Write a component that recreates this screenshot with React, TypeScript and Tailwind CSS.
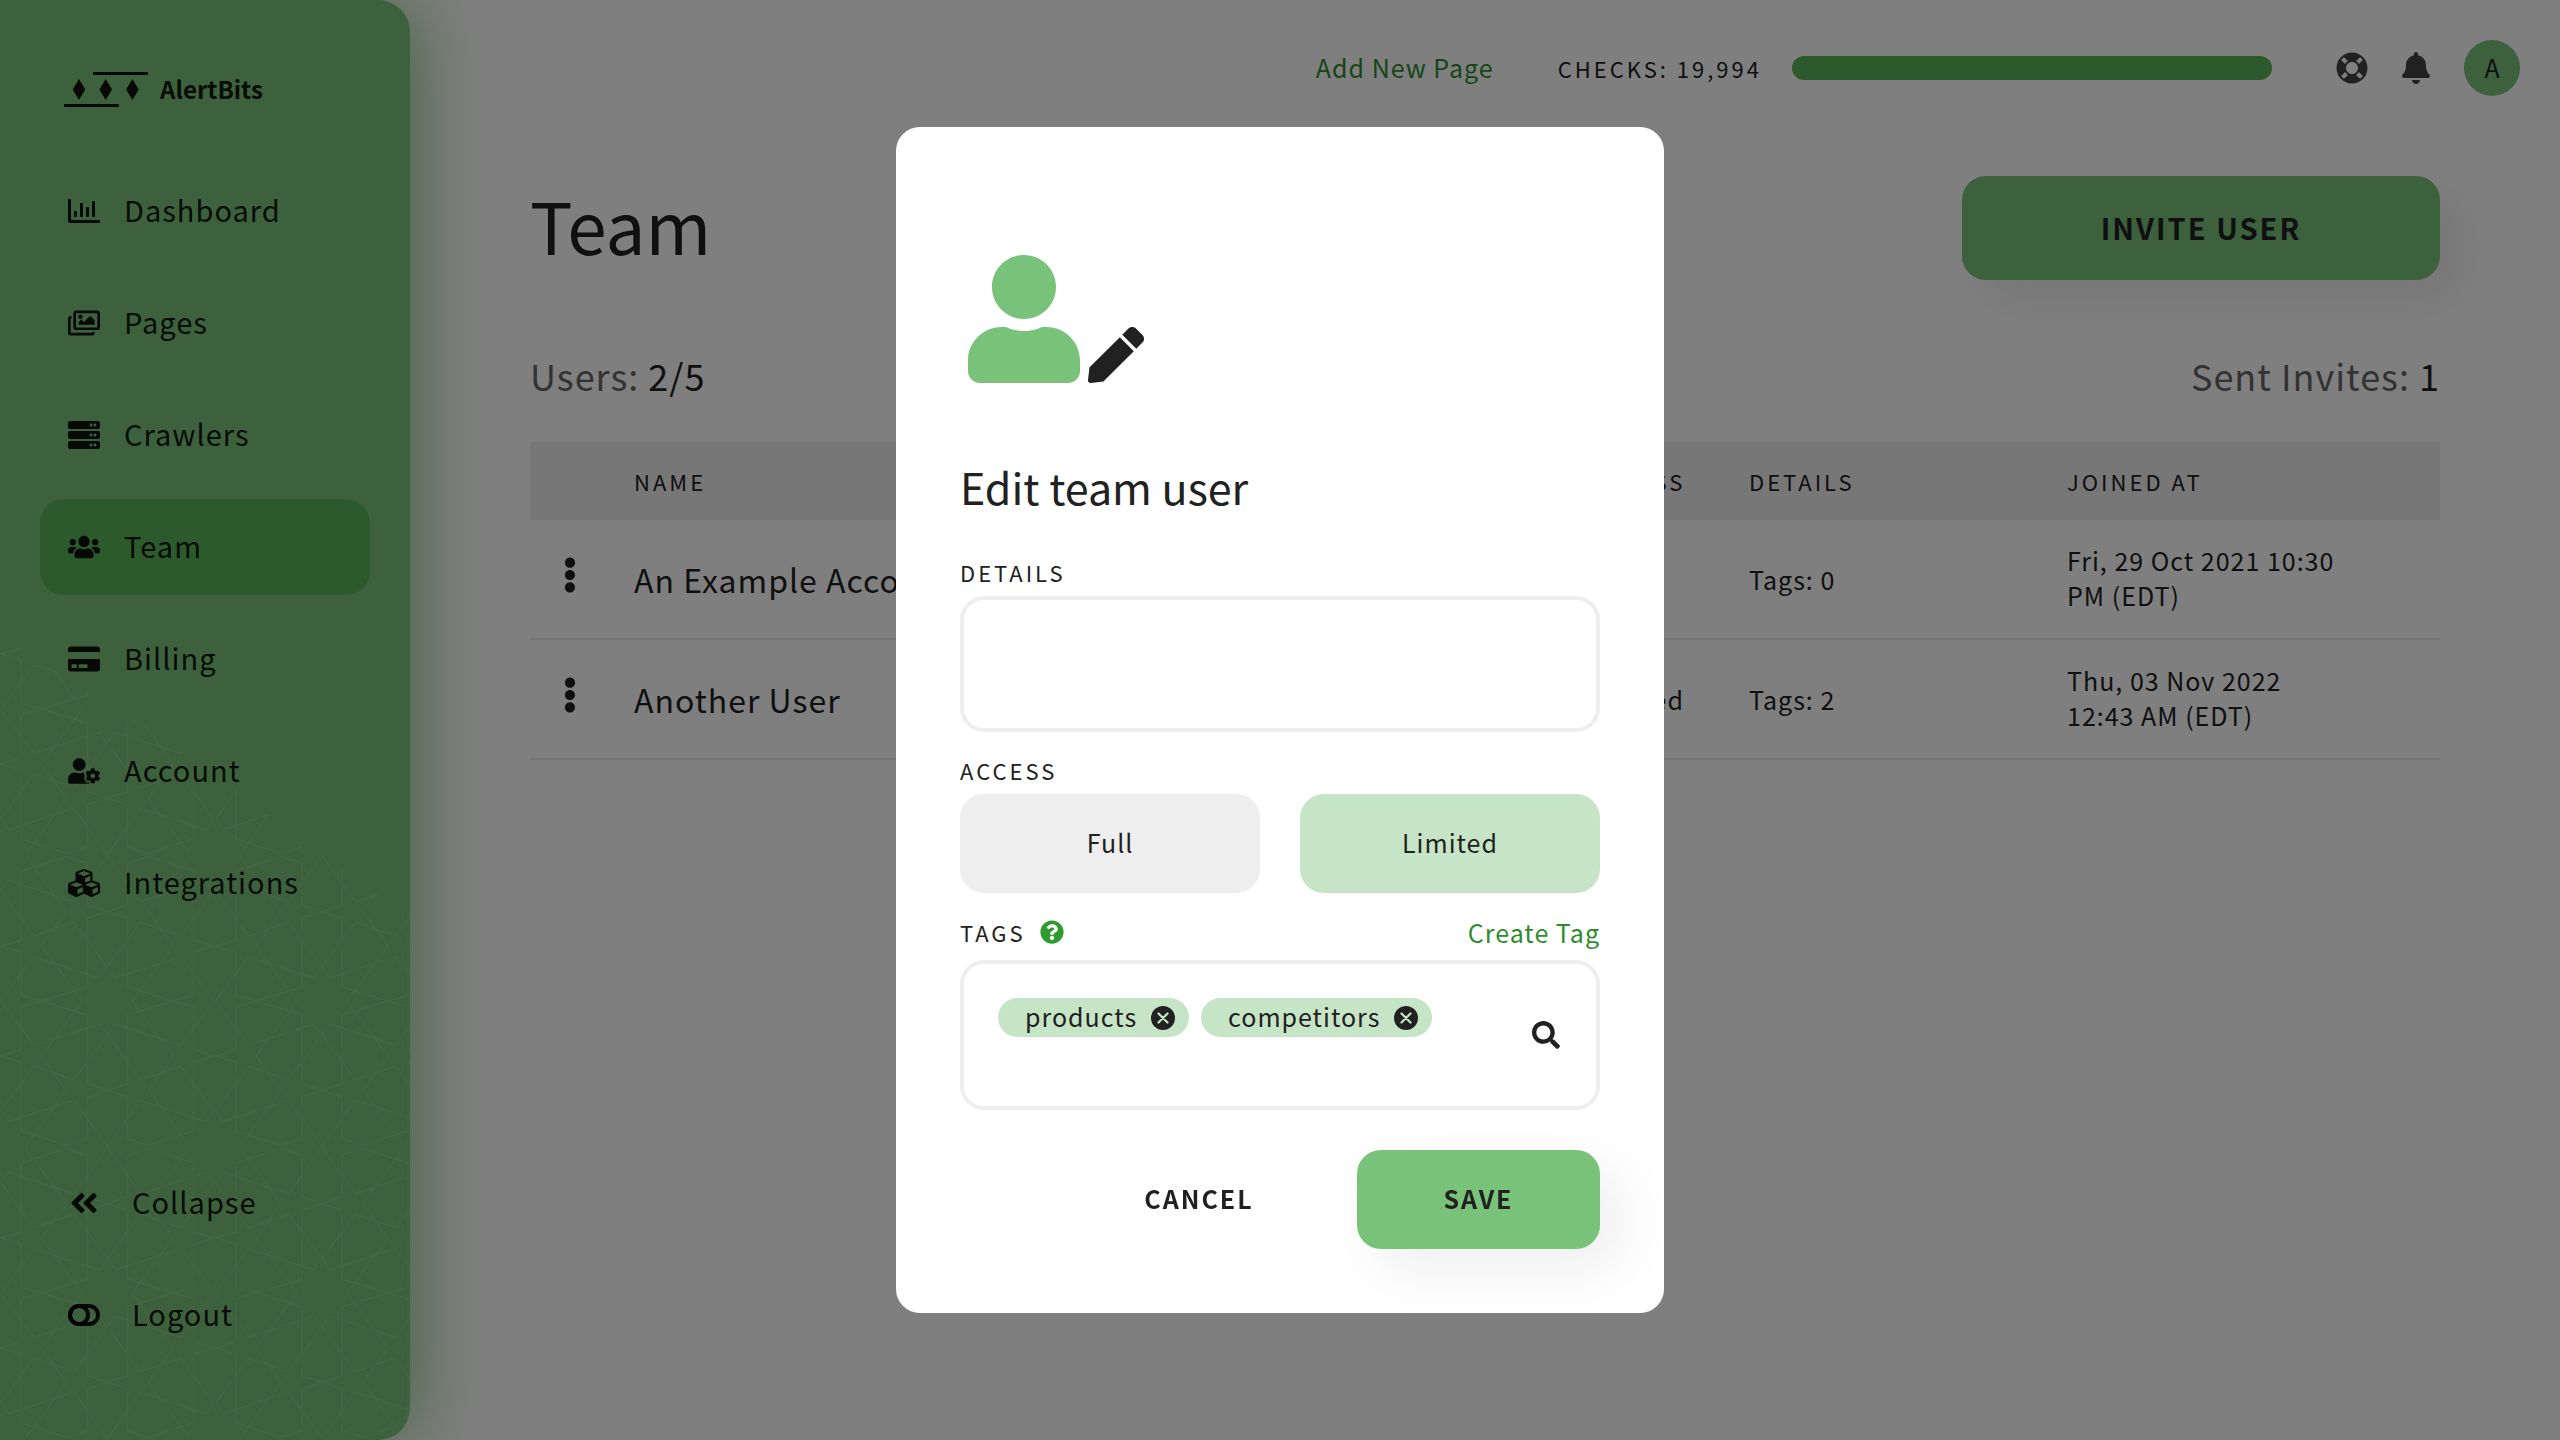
import type { ReactNode } from "react";
import type { IconType } from "react-icons";
import {
  FaAngleDoubleLeft,
  FaBell,
  FaCreditCard,
  FaCubes,
  FaEllipsisV,
  FaLifeRing,
  FaPen,
  FaQuestionCircle,
  FaRegChartBar,
  FaRegImages,
  FaSearch,
  FaServer,
  FaUser,
  FaUserCog,
  FaUsers,
} from "react-icons/fa";

const NAV: { label: string; icon: IconType; active?: boolean }[] = [
  { label: "Dashboard", icon: FaRegChartBar },
  { label: "Pages", icon: FaRegImages },
  { label: "Crawlers", icon: FaServer },
  { label: "Team", icon: FaUsers, active: true },
  { label: "Billing", icon: FaCreditCard },
  { label: "Account", icon: FaUserCog },
  { label: "Integrations", icon: FaCubes },
];

const USERS = [
  { name: "An Example Account", access: "Full", details: "Tags: 0", joined: "Fri, 29 Oct 2021 10:30 PM (EDT)" },
  { name: "Another User", access: "Limited", details: "Tags: 2", joined: "Thu, 03 Nov 2022 12:43 AM (EDT)" },
];

const TAGS = ["products", "competitors"];

function Logo() {
  return (
    <svg viewBox="0 0 84 36" className="h-9 w-[84px]" fill="currentColor" aria-hidden="true">
      <rect x="29" y="0" width="55" height="3" rx="1" />
      <rect x="0" y="32" width="55" height="3" rx="1" />
      <path d="M15 7l6.300 10.500L15 28 8.700 17.500zM41.700 7L48 17.500 41.700 28l-6.300-10.500zM68.400 7l6.300 10.500L68.400 28l-6.300-10.500z" />
    </svg>
  );
}

function ToggleIcon() {
  return (
    <svg viewBox="0 0 32 22" className="w-8" fill="none" stroke="currentColor" strokeWidth="4" aria-hidden="true">
      <rect x="2" y="2" width="28" height="18" rx="9" />
      <circle cx="11" cy="11" r="9" />
    </svg>
  );
}

function RemoveIcon() {
  return (
    <svg viewBox="0 0 24 24" className="size-6" aria-hidden="true">
      <circle cx="12" cy="12" r="12" fill="currentColor" />
      <path d="M7.500 7.500l9 9M16.500 7.500l-9 9" stroke="#c6e5c6" strokeWidth="2.200" strokeLinecap="round" />
    </svg>
  );
}

/* Ten-fold star lattice: one quarter of the tile, mirrored into the other three. */
function StarPattern() {
  return (
    <svg viewBox="0 0 410 816" preserveAspectRatio="xMinYMax slice" className="absolute bottom-0 left-0 w-full" aria-hidden="true">
      <defs>
        <path
          id="quarter"
          d="M64 17L126 0L262 42V249L322 268L262 288V413L199 433L64 390V183L3 165L64 145V17M3 2L102 133L298 69L322 102L222 237L102 195L3 330L26 362L222 297L322 437M247 0L124 165L199 268L78 433"
        />
        <pattern id="stars" width="644" height="876" patternUnits="userSpaceOnUse" patternTransform="translate(0 377) scale(0.3333)">
          <g fill="none" stroke="#ffffff" strokeWidth="4">
            <use href="#quarter" />
            <use href="#quarter" transform="translate(644 0) scale(-1 1)" />
            <use href="#quarter" transform="translate(0 876) scale(1 -1)" />
            <use href="#quarter" transform="translate(644 876) scale(-1 -1)" />
          </g>
        </pattern>
      </defs>
      <path d="M0 10L80 62L180 122L300 216L410 290V816H0z" fill="url(#stars)" fillOpacity="0.13" />
    </svg>
  );
}

function NavLink({ label, active, children }: { label: string; active?: boolean; children: ReactNode }) {
  return (
    <a
      href="#"
      aria-current={active ? "page" : undefined}
      className={`flex h-24 items-center gap-6 rounded-3xl px-7 text-[29px] tracking-[1px] ${active ? "bg-[#58b458]" : ""}`}
    >
      {children}
      <span className="pb-0.5">{label}</span>
    </a>
  );
}

function Sidebar() {
  return (
    <aside className="relative flex min-h-screen w-[410px] shrink-0 flex-col rounded-r-[32px] bg-[#79c279] px-10 pb-[77px] text-black/90 shadow-[0_0_80px_#79c279]">
      <div className="absolute inset-0 overflow-hidden rounded-r-[32px]">
        <StarPattern />
      </div>
      <a href="#" className="relative mt-[72px] mb-[55px] flex h-9 items-center gap-3 pl-6 text-[24px] font-bold">
        <Logo />
        <span className="pb-0.5">AlertBits</span>
      </a>
      <nav className="relative flex grow flex-col gap-4">
        {NAV.map(({ label, icon: Icon, active }) => (
          <NavLink key={label} label={label} active={active}>
            <Icon className="h-auto w-8" />
          </NavLink>
        ))}
        <button type="button" className="mt-auto flex h-24 items-center gap-8 px-7 text-[29px] tracking-[1px]">
          <FaAngleDoubleLeft className="size-8" />
          <span className="pb-0.5">Collapse</span>
        </button>
        <button type="button" className="flex h-24 items-center gap-8 px-7 text-[29px] tracking-[1px]">
          <ToggleIcon />
          <span className="pb-0.5">Logout</span>
        </button>
      </nav>
    </aside>
  );
}

function TopBar() {
  return (
    <header className="flex h-[136px] items-center justify-end pr-10">
      <a href="#" className="mr-16 text-[25px] tracking-[1px] text-[#2e8b2e]">
        Add New Page
      </a>
      <span className="mr-[30px] text-[22px] tracking-[3px]">CHECKS: 19,994</span>
      <div role="progressbar" aria-label="Checks" aria-valuenow={19994} aria-valuemax={20000} className="mr-16 h-6 w-[480px] rounded-full bg-[#58b458]" />
      <button type="button" aria-label="Help" className="mr-8">
        <FaLifeRing className="size-8 text-[#424242]" />
      </button>
      <button type="button" aria-label="Notifications" className="mr-8">
        <FaBell className="size-8 text-[#424242]" />
      </button>
      <button type="button" className="size-14 rounded-full bg-[#79c279] text-[25px]">
        A
      </button>
    </header>
  );
}

function TeamPage() {
  return (
    <main className="px-[120px] pt-10">
      <div className="flex items-center justify-between">
        <h1 className="pb-2 text-[71px] leading-[96px]">Team</h1>
        <button
          type="button"
          className="h-[104px] w-[478px] rounded-3xl bg-[#79c279] text-[29px] font-bold tracking-[2px] shadow-[20px_20px_48px_rgba(0,0,0,0.08)]"
        >
          INVITE USER
        </button>
      </div>
      <div className="mt-[71px] mb-[43px] flex justify-between text-[36px] leading-[48px] tracking-[1px]">
        <p>
          <span className="text-[#666666]">Users:</span> 2/5
        </p>
        <p>
          <span className="text-[#666666]">Sent Invites:</span> 1
        </p>
      </div>
      <table className="w-full table-fixed border-separate border-spacing-0 text-left">
        <colgroup>
          <col className="w-[72px]" />
          <col />
          <col className="w-[161px]" />
          <col className="w-[318px]" />
          <col className="w-[405px]" />
        </colgroup>
        <thead>
          <tr className="h-[78px] bg-[#eeeeee] text-[22px] tracking-[3px]">
            <th aria-label="Actions" />
            <th className="px-8 font-normal">NAME</th>
            <th className="pl-8 font-normal">ACCESS</th>
            <th className="px-8 font-normal">DETAILS</th>
            <th className="px-8 font-normal">JOINED AT</th>
          </tr>
        </thead>
        <tbody>
          {USERS.map((user) => (
            <tr key={user.name} className="h-[120px] text-[25px] leading-[35px] tracking-[1px] *:border-b-2 *:border-[#ebebeb]">
              <td className="pb-2 pl-[22px]">
                <button type="button" aria-label={`Actions for ${user.name}`} className="block">
                  <FaEllipsisV className="size-9" />
                </button>
              </td>
              <td className="px-8 text-[32px]">{user.name}</td>
              <td className="pl-8">{user.access}</td>
              <td className="px-8">{user.details}</td>
              <td className="pr-24 pb-0.5 pl-8">{user.joined}</td>
            </tr>
          ))}
        </tbody>
      </table>
    </main>
  );
}

function EditUserDialog() {
  return (
    <div className="fixed inset-0 flex items-center justify-center bg-black/50">
      <form role="dialog" aria-labelledby="dialog-title" className="w-[768px] rounded-3xl bg-white p-16 text-[25px] tracking-[1px]">
        <div className="mt-16 flex items-end gap-2 pl-2">
          <FaUser className="h-32 w-28 text-[#79c279]" />
          <FaPen className="size-14" />
        </div>
        <h2 id="dialog-title" className="mt-[71px] text-[43px] leading-[64px] tracking-normal">
          Edit team user
        </h2>
        <label htmlFor="details" className="mt-[38px] block text-[22px] leading-8 tracking-[3px]">
          DETAILS
        </label>
        <textarea id="details" className="mt-2 block h-[136px] w-full resize-none rounded-3xl border-4 border-[#eeeeee] p-6" />

        <div id="access" className="mt-[22px] text-[22px] leading-8 tracking-[3px]">
          ACCESS
        </div>
        <div role="group" aria-labelledby="access" className="mt-2 grid grid-cols-2 gap-10">
          <button type="button" aria-pressed="false" className="h-[99px] rounded-3xl bg-[#eeeeee] pb-0.5 tracking-[1px]">
            Full
          </button>
          <button type="button" aria-pressed="true" className="h-[99px] rounded-3xl bg-[#c6e5c6] pb-0.5 tracking-[1px]">
            Limited
          </button>
        </div>

        <div className="mt-[22px] flex h-9 items-center justify-between">
          <div className="flex items-center gap-[14px] pb-0.5">
            <label htmlFor="tags" className="text-[22px] leading-8 tracking-[3px]">
              TAGS
            </label>
            <button type="button" aria-label="About tags">
              <FaQuestionCircle className="size-6 text-[#2e9b2e]" />
            </button>
          </div>
          <a href="#" className="text-[#2e8b2e]">
            Create Tag
          </a>
        </div>
        <div className="mt-[9px] flex h-[150px] items-center rounded-3xl border-4 border-[#eeeeee] pr-9 pl-[34px]">
          <ul className="flex gap-3 self-start pt-[34px]">
            {TAGS.map((tag) => (
              <li key={tag} className="flex h-[39px] items-center gap-[14px] rounded-full bg-[#c6e5c6] pr-[14px] pl-[27px]">
                <span className="pb-0.5">{tag}</span>
                <button type="button" aria-label={`Remove ${tag}`}>
                  <RemoveIcon />
                </button>
              </li>
            ))}
          </ul>
          <input id="tags" type="text" className="h-full w-0 grow outline-none" />
          <FaSearch className="size-7" />
        </div>

        <div className="mt-10 flex justify-end gap-2 font-bold">
          <button type="button" className="h-[99px] w-[300px] pb-0.5 tracking-[2px]">
            CANCEL
          </button>
          <button type="submit" className="h-[99px] w-[243px] rounded-3xl bg-[#79c279] pb-0.5 tracking-[2px] shadow-[20px_20px_60px_rgba(0,0,0,0.07)]">
            SAVE
          </button>
        </div>
      </form>
    </div>
  );
}

export default function App() {
  return (
    <div className="flex min-h-screen bg-white font-['Noto_Sans_CJK_SC','Noto_Sans',sans-serif] text-[#212121]">
      <Sidebar />
      <div className="min-w-0 grow">
        <TopBar />
        <TeamPage />
      </div>
      <EditUserDialog />
    </div>
  );
}
